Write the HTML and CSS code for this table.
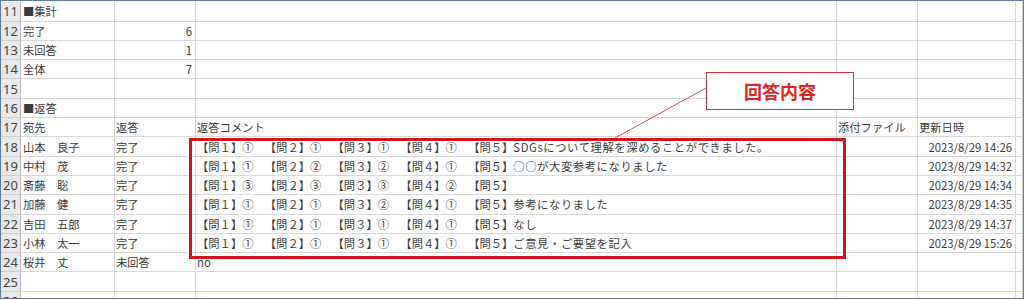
FILE: index.html
```html
<!DOCTYPE html>
<html lang="ja">
<head>
<meta charset="utf-8">
<link rel="stylesheet" href="styles.css">
</head>
<body>
<div class="frame">
  <div class="sheet">
    <div class="row"><div class="rh">11</div><div class="c">■集計</div><div class="c"></div><div class="c"></div><div class="c"></div><div class="c"></div><div class="c"></div></div>
    <div class="row"><div class="rh">12</div><div class="c">完了</div><div class="c num">6</div><div class="c"></div><div class="c"></div><div class="c"></div><div class="c"></div></div>
    <div class="row"><div class="rh">13</div><div class="c">未回答</div><div class="c num">1</div><div class="c"></div><div class="c"></div><div class="c"></div><div class="c"></div></div>
    <div class="row"><div class="rh">14</div><div class="c">全体</div><div class="c num">7</div><div class="c"></div><div class="c"></div><div class="c"></div><div class="c"></div></div>
    <div class="row"><div class="rh">15</div><div class="c"></div><div class="c"></div><div class="c"></div><div class="c"></div><div class="c"></div><div class="c"></div></div>
    <div class="row"><div class="rh">16</div><div class="c">■返答</div><div class="c"></div><div class="c"></div><div class="c"></div><div class="c"></div><div class="c"></div></div>
    <div class="row"><div class="rh">17</div><div class="c">宛先</div><div class="c">返答</div><div class="c">返答コメント</div><div class="c">添付ファイル</div><div class="c">更新日時</div><div class="c"></div></div>
    <div class="row"><div class="rh">18</div><div class="c">山本　良子</div><div class="c">完了</div><div class="c">【問１】①　【問２】①　【問３】①　【問４】①　【問５】<span class="ans">SDGsについて理解を深めることができました。</span></div><div class="c"></div><div class="c num">2023/8/29 14:26</div><div class="c"></div></div>
    <div class="row"><div class="rh">19</div><div class="c">中村　茂</div><div class="c">完了</div><div class="c">【問１】①　【問２】②　【問３】②　【問４】①　【問５】<span class="ans">○○が大変参考になりました</span></div><div class="c"></div><div class="c num">2023/8/29 14:32</div><div class="c"></div></div>
    <div class="row"><div class="rh">20</div><div class="c">斎藤　聡</div><div class="c">完了</div><div class="c">【問１】③　【問２】③　【問３】③　【問４】②　【問５】</div><div class="c"></div><div class="c num">2023/8/29 14:34</div><div class="c"></div></div>
    <div class="row"><div class="rh">21</div><div class="c">加藤　健</div><div class="c">完了</div><div class="c">【問１】①　【問２】①　【問３】②　【問４】①　【問５】<span class="ans">参考になりました</span></div><div class="c"></div><div class="c num">2023/8/29 14:35</div><div class="c"></div></div>
    <div class="row"><div class="rh">22</div><div class="c">吉田　五郎</div><div class="c">完了</div><div class="c">【問１】①　【問２】①　【問３】①　【問４】①　【問５】<span class="ans">なし</span></div><div class="c"></div><div class="c num">2023/8/29 14:37</div><div class="c"></div></div>
    <div class="row"><div class="rh">23</div><div class="c">小林　太一</div><div class="c">完了</div><div class="c">【問１】①　【問２】①　【問３】①　【問４】①　【問５】<span class="ans">ご意見・ご要望を記入</span></div><div class="c"></div><div class="c num">2023/8/29 15:26</div><div class="c"></div></div>
    <div class="row"><div class="rh">24</div><div class="c">桜井　丈</div><div class="c">未回答</div><div class="c">no</div><div class="c"></div><div class="c"></div><div class="c"></div></div>
    <div class="row"><div class="rh">25</div><div class="c"></div><div class="c"></div><div class="c"></div><div class="c"></div><div class="c"></div><div class="c"></div></div>
    <div class="row"><div class="rh">26</div><div class="c"></div><div class="c"></div><div class="c"></div><div class="c"></div><div class="c"></div><div class="c"></div></div>
  </div>
  <svg class="leader" width="1022" height="297" viewBox="0 0 1022 297">
    <line x1="614" y1="137" x2="705" y2="87" stroke="#d04848" stroke-width="1"/>
  </svg>
  <div class="highlight"></div>
  <div class="callout">回答内容</div>
</div>
</body>
</html>
```
FILE: styles.css
```css
html, body {
  margin: 0;
  padding: 0;
  background: #ffffff;
}

.frame {
  position: relative;
  width: 1024px;
  height: 299px;
  box-sizing: border-box;
  border: 1px solid #5d7b9d;
  padding-top: 1.3px;
  overflow: hidden;
  font-family: "Noto Sans CJK JP", "Noto Sans", sans-serif;
  font-size: 11.3px;
  color: #3c3c3c;
  text-spacing-trim: space-all;
}

.sheet {
  display: flex;
  flex-direction: column;
}

.row {
  display: grid;
  grid-template-columns: 20px 94px 81px 641px 81px 98px 1fr;
  height: 19.3px;
}

.rh,
.c {
  box-sizing: border-box;
  border-bottom: 1px solid #d8d8d8;
  border-right: 1px solid #d8d8d8;
  display: flex;
  align-items: center;
  white-space: nowrap;
  overflow: hidden;
}

.rh {
  justify-content: center;
  background: #e9e9e9;
  border-right-color: #b8b8b8;
  border-bottom-color: #cfcfcf;
  color: #444444;
  font-size: 13px;
  font-family: "Noto Sans", "Noto Sans CJK JP", sans-serif;
}

.c {
  padding: 0 2px 0 1px;
}

.row .c:nth-child(2) {
  padding-left: 2px;
}

.ans {
  letter-spacing: 0.6px;
}

.num {
  justify-content: flex-end;
  padding-right: 3px;
}

.leader {
  position: absolute;
  left: 0;
  top: 0;
}

.highlight {
  position: absolute;
  left: 188px;
  top: 137px;
  width: 657px;
  height: 121px;
  box-sizing: border-box;
  border: 3px solid #d0141c;
}

.callout {
  position: absolute;
  left: 705px;
  top: 71px;
  width: 148px;
  height: 38px;
  box-sizing: border-box;
  border: 1px solid #c8363b;
  background: #ffffff;
  display: flex;
  align-items: center;
  justify-content: center;
  color: #e5231e;
  font-weight: bold;
  font-size: 18px;
}
```
